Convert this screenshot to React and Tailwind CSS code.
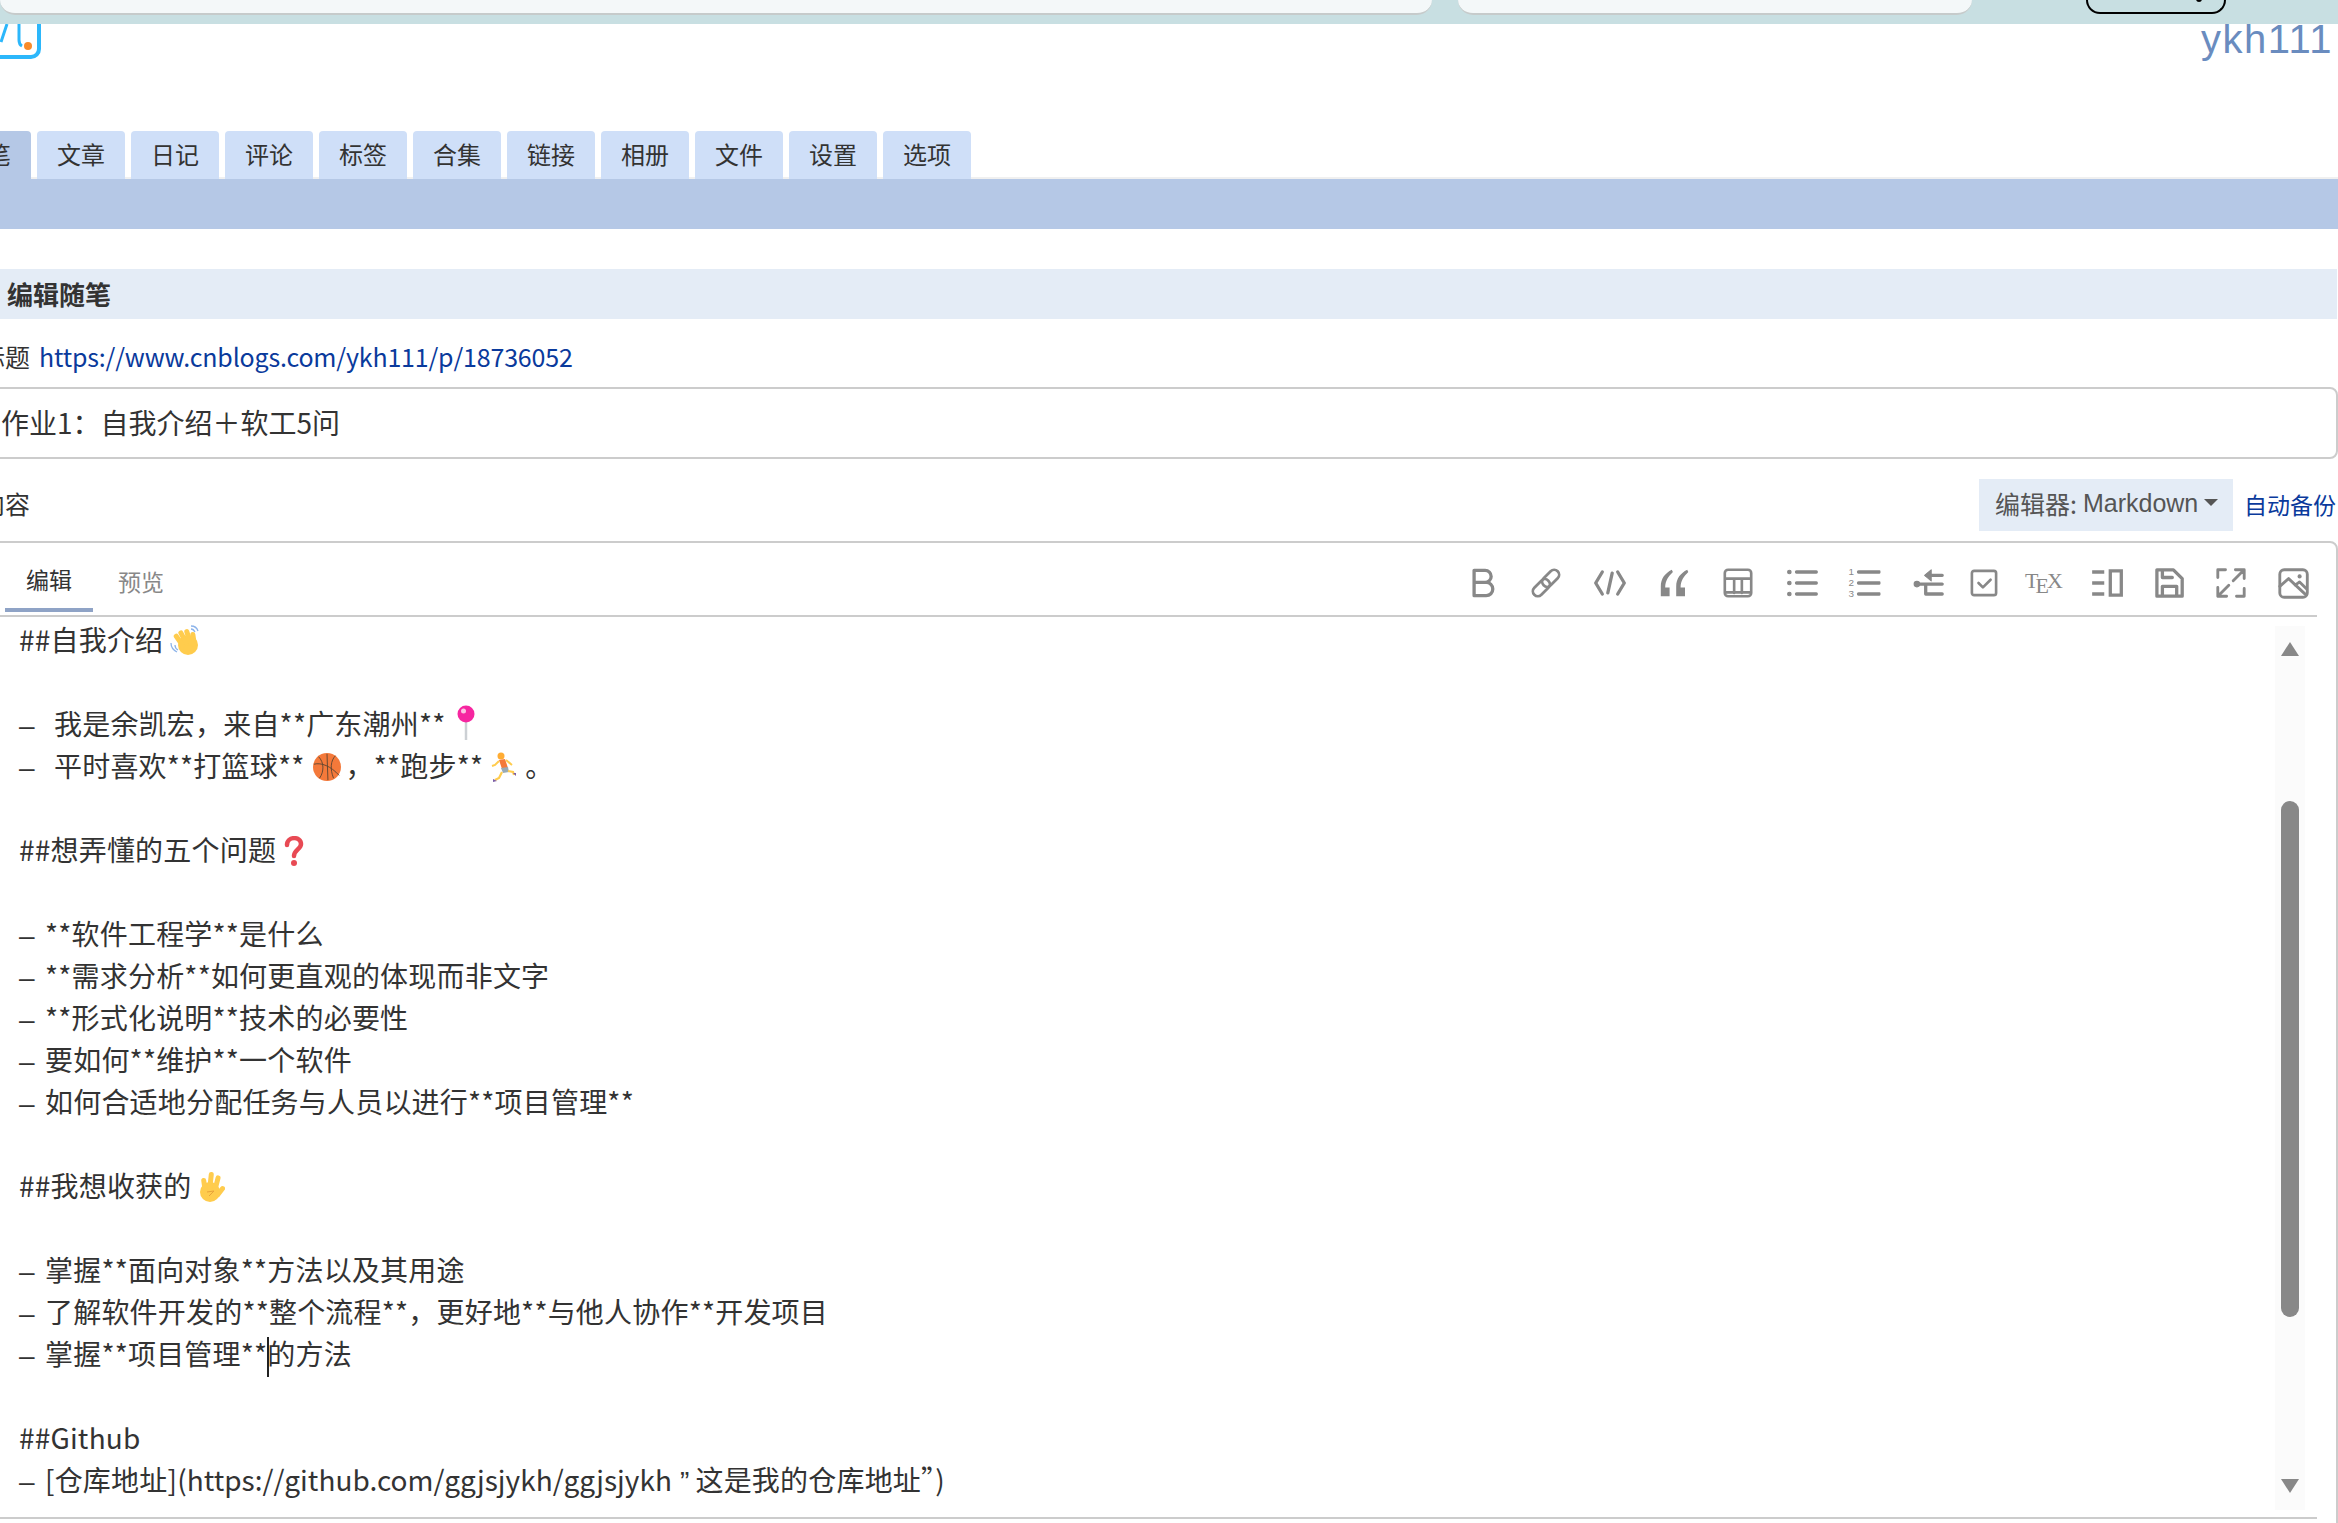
import React from "react";

const tabs = ["文章", "日记", "评论", "标签", "合集", "链接", "相册", "文件", "设置", "选项"];

const Svg = ({ className = "", children }) => (
  <svg
    viewBox="0 0 30 30"
    fill="none"
    stroke="#888"
    strokeWidth="3"
    strokeLinecap="round"
    strokeLinejoin="round"
    className={`w-[30px] h-[30px] shrink-0 scale-110 ${className}`}
  >
    {children}
  </svg>
);

const toolbar = [
  { key: "bold", ml: "ml-0", icon: <path d="M6 3.5h10a5.5 5.5 0 0 1 0 11H6zM6 14.5h11a6 6 0 0 1 0 12H6z" /> },
  {
    key: "link",
    ml: "ml-[32px]",
    icon: (
      <g transform="rotate(-45 15 15)" strokeWidth="2.5">
        <rect x="0" y="10.500" width="18" height="9" rx="4.500" />
        <rect x="12" y="10.500" width="18" height="9" rx="4.500" />
      </g>
    ),
  },
  { key: "code", ml: "ml-[34px]", icon: <path d="M8 5l-6 10 6 10M22 5l6 10-6 10M17 6l-4 18" /> },
  {
    key: "quote",
    ml: "ml-[34px]",
    icon: (
      <g fill="#888" stroke="none">
        <path d="M13 3C7 6 3 11 3 18v9h8v-8H7c0-6 3-10 7-14z" />
        <path d="M27 3c-6 3-10 8-10 15v9h8v-8h-4c0-6 3-10 7-14z" />
      </g>
    ),
  },
  {
    key: "table",
    ml: "ml-[34px]",
    icon: <path strokeWidth="2.4" d="M6 3h18a3 3 0 0 1 3 3v18a3 3 0 0 1-3 3H6a3 3 0 0 1-3-3V6a3 3 0 0 1 3-3zM3 11h24M3 23.5h24M11.500 11v13M18.500 11v13" />,
  },
  {
    key: "list",
    ml: "ml-[34px]",
    icon: (
      <>
        <path d="M10 5h18M10 15h18M10 25h18" />
        <circle cx="3.500" cy="5" r="1.600" fill="#888" strokeWidth="1" />
        <circle cx="3.500" cy="15" r="1.600" fill="#888" strokeWidth="1" />
        <circle cx="3.500" cy="25" r="1.600" fill="#888" strokeWidth="1" />
      </>
    ),
  },
  {
    key: "ol",
    ml: "ml-[32px]",
    icon: (
      <>
        <path d="M10 5h19M10 15h19M10 25h19" />
        <g fill="#888" stroke="none" fontSize="9" fontFamily="Liberation Sans" textAnchor="middle">
          <text x="3.500" y="8">1</text>
          <text x="3.500" y="18">2</text>
          <text x="3.500" y="28">3</text>
        </g>
      </>
    ),
  },
  {
    key: "outdent",
    ml: "ml-[35px]",
    icon: (
      <>
        <path d="M5 16h22M12 16v9h15M13 8h14" />
        <path d="M17 3l-6 5 6 5z" fill="#888" strokeWidth="1" />
        <circle cx="4" cy="16" r="2.500" fill="#888" strokeWidth="1" />
      </>
    ),
  },
  {
    key: "check",
    ml: "ml-[25px]",
    icon: <path strokeWidth="2.4" d="M6 4h18a2 2 0 0 1 2 2v18a2 2 0 0 1-2 2H6a2 2 0 0 1-2-2V6a2 2 0 0 1 2-2zM10 15l4 4 7-7" />,
  },
  {
    key: "tex",
    ml: "ml-[26px]",
    icon: null,
  },
  {
    key: "columns",
    ml: "ml-[29px]",
    icon: <path d="M1.500 5h11M1.500 15h11M1.500 25h11M18 4h10v22H18z" strokeLinecap="butt" strokeLinejoin="miter" />,
  },
  {
    key: "save",
    ml: "ml-[32px]",
    icon: <path d="M4 3h15l8 8v16H4zM9 3v7h9M9 27v-9h13v9" strokeLinejoin="round" />,
  },
  {
    key: "expand",
    ml: "ml-[32px]",
    icon: <path strokeWidth="2.6" d="M3 10V3h7M19 3h8v8M27 3L17 13M3 19v8h8M3 27l10-10M27 20v7h-7" />,
  },
  {
    key: "image",
    ml: "ml-[32px]",
    icon: (
      <>
        <path strokeWidth="2.6" d="M7 3h17a4 4 0 0 1 4 4v17a4 4 0 0 1-4 4H7a4 4 0 0 1-4-4V7a4 4 0 0 1 4-4z" />
        <path strokeWidth="2.6" d="M3 18l8-7 16 15M17 17l4-3 6 6" />
        <circle cx="21" cy="9" r="1.400" fill="#888" strokeWidth="1" />
      </>
    ),
  },
];

const Wave = () => (
  <svg viewBox="0 0 36 32" className="inline-block w-[36px] h-[32px] ml-[5px] -mt-[4px] align-middle">
    <g fill="#ffcc4d">
      <circle cx="20" cy="20" r="10" />
      <rect x="9" y="8" width="5" height="16" rx="2.500" transform="rotate(-35 11 16)" />
      <rect x="13" y="5" width="5" height="17" rx="2.500" transform="rotate(-28 15 13)" />
      <rect x="18" y="4" width="5" height="17" rx="2.500" transform="rotate(-18 20 12)" />
      <rect x="23" y="7" width="5" height="15" rx="2.500" transform="rotate(-8 25 14)" />
    </g>
    <path d="M3 18c0 4 2 7 6 9M7 20c0 2 1 4 3 5M23 1c3 0 6 2 7 5M23 4c2 0 3 1 4 3" fill="none" stroke="#8db4ea" strokeWidth="1.300" />
  </svg>
);

const Pin = () => (
  <svg viewBox="0 0 20 36" className="inline-block w-[20px] h-[36px] ml-[10px] -mt-[8px] align-middle">
    <path d="M10 16v19" stroke="#ccd0d4" strokeWidth="2.500" />
    <circle cx="10" cy="9" r="8.500" fill="#f626a0" />
    <circle cx="7.500" cy="6" r="2.500" fill="#fbc4e2" />
  </svg>
);

const Ball = () => (
  <svg viewBox="0 0 30 30" className="inline-block w-[28px] h-[28px] ml-[8px] mr-[5px] -mt-[4px] align-middle">
    <circle cx="15" cy="15" r="15" fill="#f4793a" />
    <path d="M15 1l1 28M1 12c8-2 18 2 27 12M6 4c6 6 6 16 1 23M24 3c-5 5-6 14-2 24" fill="none" stroke="#5f4632" strokeWidth="1" />
  </svg>
);

const Runner = () => (
  <svg viewBox="0 0 26 30" className="inline-block w-[26px] h-[30px] ml-[8px] mr-[8px] -mt-[4px] align-middle">
    <circle cx="10" cy="4" r="3.500" fill="#ffac33" />
    <path d="M8 8l6-1 3 9-6 1z" fill="#f4793a" />
    <path d="M15 8l6 5M8 9l-4 4-3 1" stroke="#ffcc4d" strokeWidth="2" fill="none" />
    <path d="M10 16l7-1 1 5-6 1z" fill="#99aab5" />
    <path d="M11 20l-3 6-4 2M17 19l5 1 1 3" stroke="#ffcc4d" strokeWidth="2.200" fill="none" />
    <path d="M2 27l4 2-4 1zM22 21l3 0 0 3z" fill="#7b5ea7" />
  </svg>
);

const Question = () => (
  <svg viewBox="0 0 20 30" className="inline-block w-[20px] h-[30px] ml-[8px] -mt-[4px] align-middle">
    <path d="M3 9c0-9 14-9 14-1 0 5-7 6-7 12" fill="none" stroke="#e84a54" strokeWidth="4.500" strokeLinecap="round" />
    <circle cx="10" cy="27" r="3" fill="#e84a54" />
  </svg>
);

const Hand = () => (
  <svg viewBox="0 0 30 32" className="inline-block w-[30px] h-[32px] ml-[4px] -mt-[4px] align-middle">
    <g fill="#ffcc4d">
      <circle cx="15" cy="21" r="10" />
      <rect x="7" y="7" width="5" height="16" rx="2.500" transform="rotate(-8 9 15)" />
      <rect x="13" y="1" width="5" height="20" rx="2.500" transform="rotate(6 15 11)" />
      <rect x="19" y="4" width="5" height="18" rx="2.500" transform="rotate(14 21 13)" />
      <rect x="23" y="14" width="5" height="13" rx="2.500" transform="rotate(38 25 20)" />
    </g>
    <path d="M12 21l7-1-5 5" fill="none" stroke="#e8a33a" strokeWidth="1" />
  </svg>
);

const Caret = () => <span className="inline-block w-[2px] h-[40px] -mr-[2px] bg-[#222] align-middle" />;

const Dash = () => <span className="inline-block w-[26px] [font-family:'Liberation_Sans',sans-serif]">–</span>;
const WideDash = () => <span className="inline-block w-[35px] [font-family:'Liberation_Sans',sans-serif]">–</span>;

const lines = [
  <>##自我介绍<Wave /></>,
  "",
  <><WideDash />我是余凯宏，来自**广东潮州**<Pin /></>,
  <><WideDash />平时喜欢**打篮球**<Ball />，**跑步**<Runner />。</>,
  "",
  <>##想弄懂的五个问题<Question /></>,
  "",
  <><Dash />**软件工程学**是什么</>,
  <><Dash />**需求分析**如何更直观的体现而非文字</>,
  <><Dash />**形式化说明**技术的必要性</>,
  <><Dash />要如何**维护**一个软件</>,
  <><Dash />如何合适地分配任务与人员以进行**项目管理**</>,
  "",
  <>##我想收获的<Hand /></>,
  "",
  <><Dash />掌握**面向对象**方法以及其用途</>,
  <><Dash />了解软件开发的**整个流程**，更好地**与他人协作**开发项目</>,
  <><Dash />掌握**项目管理**<Caret />的方法</>,
  "",
  "##Github",
  <>
    <Dash />[仓库地址]<span className="tracking-[0.03px]">(https://github.com/ggjsjykh/ggjsjykh</span>
    <span className="mr-[6px] [font-family:'Liberation_Sans',sans-serif]"> ”</span>
    这是我的仓库地址”)
  </>,
];

export default function App() {
  return (
    <div className="w-[2338px] h-[1523px] overflow-hidden bg-white text-[#333] [font-family:'Noto_Sans_CJK_SC',sans-serif]">
      {/* browser strip */}
      <div className="flex h-[24px] overflow-hidden bg-[#c8dfe2]">
        <div className="w-[1432px] h-[15px] shrink-0 rounded-b-[20px] bg-[#f4f8f9] border-b-2 border-[#c6cbcb]" />
        <div className="w-[514px] h-[15px] ml-[26px] shrink-0 rounded-b-[20px] bg-[#f4f8f9] border-b-2 border-[#c6cbcb]" />
        <div className="flex justify-end items-end w-[140px] h-[14px] ml-[114px] pr-[22px] shrink-0 rounded-b-[20px] border-2 border-t-0 border-black">
          <span className="w-[6px] h-[6px] mb-[10px] rounded-full bg-black" />
        </div>
      </div>

      {/* blog title row */}
      <div className="flex justify-between h-[107px] overflow-hidden">
        <svg viewBox="0 0 42 36" className="w-[42px] h-[36px]" fill="none">
          <path d="M-4-2V33H31a8 8 0 0 0 8-8V-2" stroke="#2cb7fb" strokeWidth="4" />
          <path d="M7 0L1 18" stroke="#2cb7fb" strokeWidth="3" />
          <path d="M19 0v16c0 3 1 5 3 6" stroke="#2cb7fb" strokeWidth="3" />
          <circle cx="28" cy="22" r="4" fill="#f98b2a" />
        </svg>
        <div className="-mt-[5px] pr-[5px] text-[40px] leading-[40px] tracking-[1.5px] text-[#6a8cbf] [font-family:'Liberation_Sans',sans-serif]">ykh111</div>
      </div>

      {/* tabs */}
      <div className="flex gap-[6px] h-[48px] -ml-[57px] shadow-[inset_0_-2px_0_#f0f0f0]">
        <div className="flex items-center justify-center w-[88px] pb-[2px] rounded-t-[4px] bg-[#b5c8e6] text-[24px]">随笔</div>
        {tabs.map((tab) => (
          <div key={tab} className="flex items-center justify-center w-[88px] pb-[2px] rounded-t-[4px] bg-[#cfdff8] text-[24px]">
            {tab}
          </div>
        ))}
      </div>
      <div className="h-[50px] bg-[#b5c8e6]" />

      <div className="flex items-center h-[50px] mt-[40px] mr-px pl-[7px] pb-[2px] bg-[#e4ecf6] text-[26px] font-bold">编辑随笔</div>

      {/* title */}
      <div className="flex items-center gap-[9px] h-[68px] pt-[8px] -ml-[20px] text-[25px]">
        <span>标题</span>
        <a className="tracking-[-0.18px] text-[#0a3a9c]">https://www.cnblogs.com/ykh111/p/18736052</a>
      </div>
      <div className="flex items-center h-[72px] pb-[2px] -ml-[8px] pl-[7px] border-2 border-[#ccc] rounded-lg text-[28px]">
        作业1：自我介绍＋软工5问
      </div>

      {/* content header */}
      <div className="flex justify-between h-[82px] pt-[20px] -ml-[20px] text-[25px]">
        <span className="leading-[48px]">内容</span>
        <div className="flex">
          <div className="flex items-center w-[254px] h-[52px] pl-[16px] pb-[2px] bg-[#e4ecf6] text-[#555]">
            编辑器: <span className="ml-[6px] [font-family:'Liberation_Sans',sans-serif]">Markdown</span>
            <span className="ml-[6px] -mt-[4px] border-x-[7px] border-t-[7px] border-x-transparent border-t-[#555]" />
          </div>
          <a className="ml-[11px] pr-[2px] leading-[50px] text-[23px] text-[#0a3a9c]">自动备份</a>
        </div>
      </div>

      {/* editor */}
      <div className="h-[1000px] -ml-[2px] border-2 border-[#ccc] rounded-tr-lg">
        <div className="mr-[19px]">
          <div className="flex h-[74px] pl-[5px] border-b-2 border-[#ccc]">
            <div className="flex items-center justify-center w-[88px] h-[69px] pt-[8px] border-b-4 border-[#8fa3c6] text-[23px]">编辑</div>
            <div className="flex items-center justify-center w-[88px] h-[69px] pt-[7px] ml-[4px] text-[23px] text-[#888]">预览</div>
            <div className="flex items-center ml-auto mt-[8px] pr-[9px]">
              {toolbar.map((item) =>
                item.key === "tex" ? (
                  <div key={item.key} className={`flex w-[38px] h-[30px] ${item.ml} shrink-0 text-[#888] text-[22px] leading-[26px] [font-family:'Liberation_Serif',serif]`}>
                    <span>T</span>
                    <span className="-ml-[3px] mt-[5px]">E</span>
                    <span className="-ml-[2px]">X</span>
                  </div>
                ) : (
                  <Svg key={item.key} className={item.ml}>{item.icon}</Svg>
                )
              )}
            </div>
          </div>

          <div className="flex h-[902px] border-b-2 border-[#ccc] overflow-hidden">
            <div className="flex-1 pt-[1px] pl-[19px] text-[28px] leading-[42px] tracking-[0.2px] whitespace-nowrap">
              {lines.map((line, index) => (
                <div key={index} className="h-[42px]">{line}</div>
              ))}
            </div>
            {/* scrollbar */}
            <div className="flex flex-col items-center w-[30px] h-[884px] mt-[9px] mr-[12px] pt-[16px] bg-[#fbfbfb]">
              <span className="border-x-[9px] border-b-[14px] border-x-transparent border-b-[#888]" />
              <div className="w-[18px] h-[516px] mt-[145px] rounded-[9px] bg-[#888]" />
              <span className="mt-[162px] border-x-[9px] border-t-[14px] border-x-transparent border-t-[#888]" />
            </div>
          </div>
        </div>
      </div>
    </div>
  );
}
